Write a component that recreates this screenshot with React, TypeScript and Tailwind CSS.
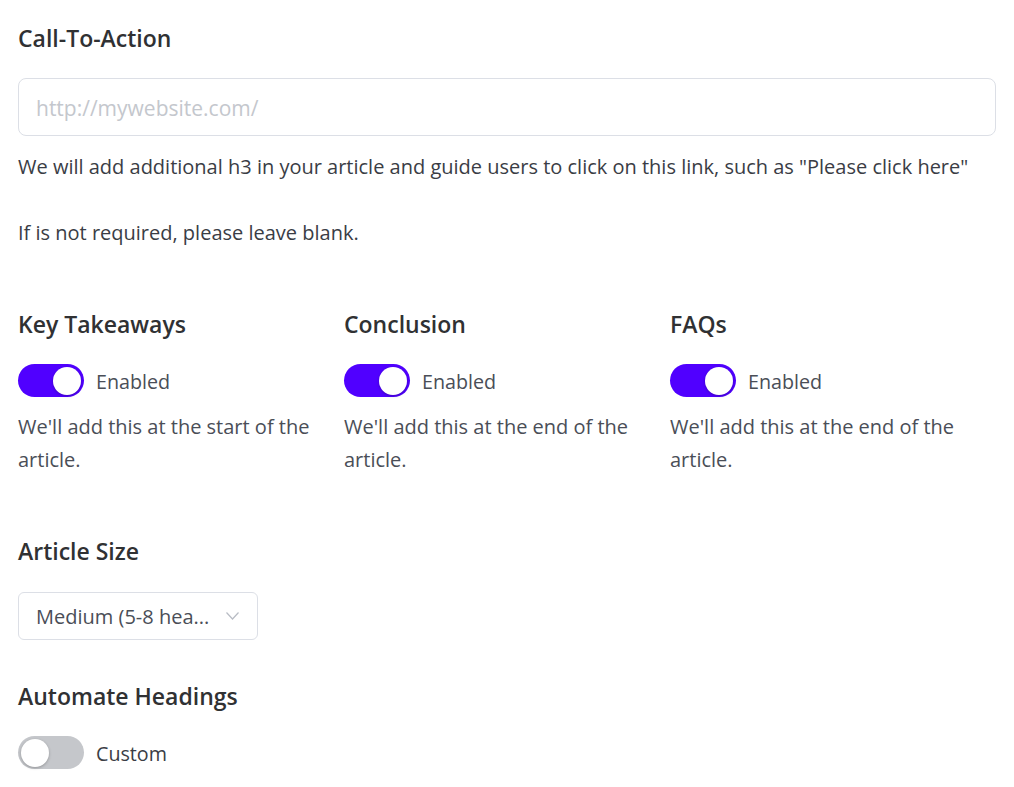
import React from "react";

function Toggle({ on }: { on: boolean }) {
  return (
    <div
      className={
        "relative h-[33px] w-[66px] shrink-0 rounded-full " +
        (on ? "bg-[#5000ff]" : "bg-[#c5c7cb]")
      }
    >
      <div
        className={
          "absolute top-[2.5px] h-[28px] w-[28px] rounded-full bg-white shadow-[0_1px_3px_rgba(0,0,0,0.25)] " +
          (on ? "left-[35px]" : "left-[3px]")
        }
      />
    </div>
  );
}

function Col({ title, desc }: { title: string; desc: string }) {
  return (
    <div className="flex flex-col">
      <h3 className="text-[23px] font-semibold leading-[30px] text-[#303133]">{title}</h3>
      <div className="mt-[25px] flex items-center gap-[12px]">
        <Toggle on />
        <span className="mt-[3px] text-[19.7px] text-[#4a4e57]">Enabled</span>
      </div>
      <p className="mt-[13px] pr-[12px] text-[20px] leading-[33px] text-[#4a4e57]">{desc}</p>
    </div>
  );
}

export default function App() {
  return (
    <div
      className="min-h-[787px] bg-white px-[18px] pt-[23px]"
      style={{ fontFamily: "'Open Sans', 'Noto Sans', sans-serif" }}
    >
      <h2 className="text-[23px] font-semibold leading-[30px] text-[#303133]">Call-To-Action</h2>
      <div className="mt-[25px] flex h-[58px] items-center rounded-[8px] border border-[#dcdfe6] px-[17px]">
        <span className="mt-[4px] text-[21px] text-[#c4c7cd]">http://mywebsite.com/</span>
      </div>
      <p className="mt-[14px] text-[20px] leading-[33px] text-[#3a3d45]">
        We will add additional h3 in your article and guide users to click on this link, such as "Please click here"
        <br />
        <br />
        If is not required, please leave blank.
      </p>

      <div className="mt-[60px] grid grid-cols-3">
        <Col title="Key Takeaways" desc="We'll add this at the start of the article." />
        <Col title="Conclusion" desc="We'll add this at the end of the article." />
        <Col title="FAQs" desc="We'll add this at the end of the article." />
      </div>

      <h3 className="mt-[60px] text-[23px] font-semibold leading-[30px] text-[#303133]">Article Size</h3>
      <div className="mt-[26px] flex h-[48px] w-[240px] items-center justify-between rounded-[6px] border border-[#dcdfe6] pl-[17px] pr-[18px]">
        <span className="mt-[2px] text-[20px] text-[#4a4e57]">Medium (5-8 hea...</span>
        <svg width="13" height="8" viewBox="0 0 13 8" fill="none">
          <path d="M0.5 0.5 L6.5 7 L12.5 0.5" stroke="#b8bcc4" strokeWidth="1.2" />
        </svg>
      </div>

      <h3 className="mt-[41px] text-[23px] font-semibold leading-[30px] text-[#303133]">Automate Headings</h3>
      <div className="mt-[25px] flex items-center gap-[12px]">
        <Toggle on={false} />
        <span className="mt-[3px] text-[19.7px] text-[#3a3d45]">Custom</span>
      </div>
    </div>
  );
}
